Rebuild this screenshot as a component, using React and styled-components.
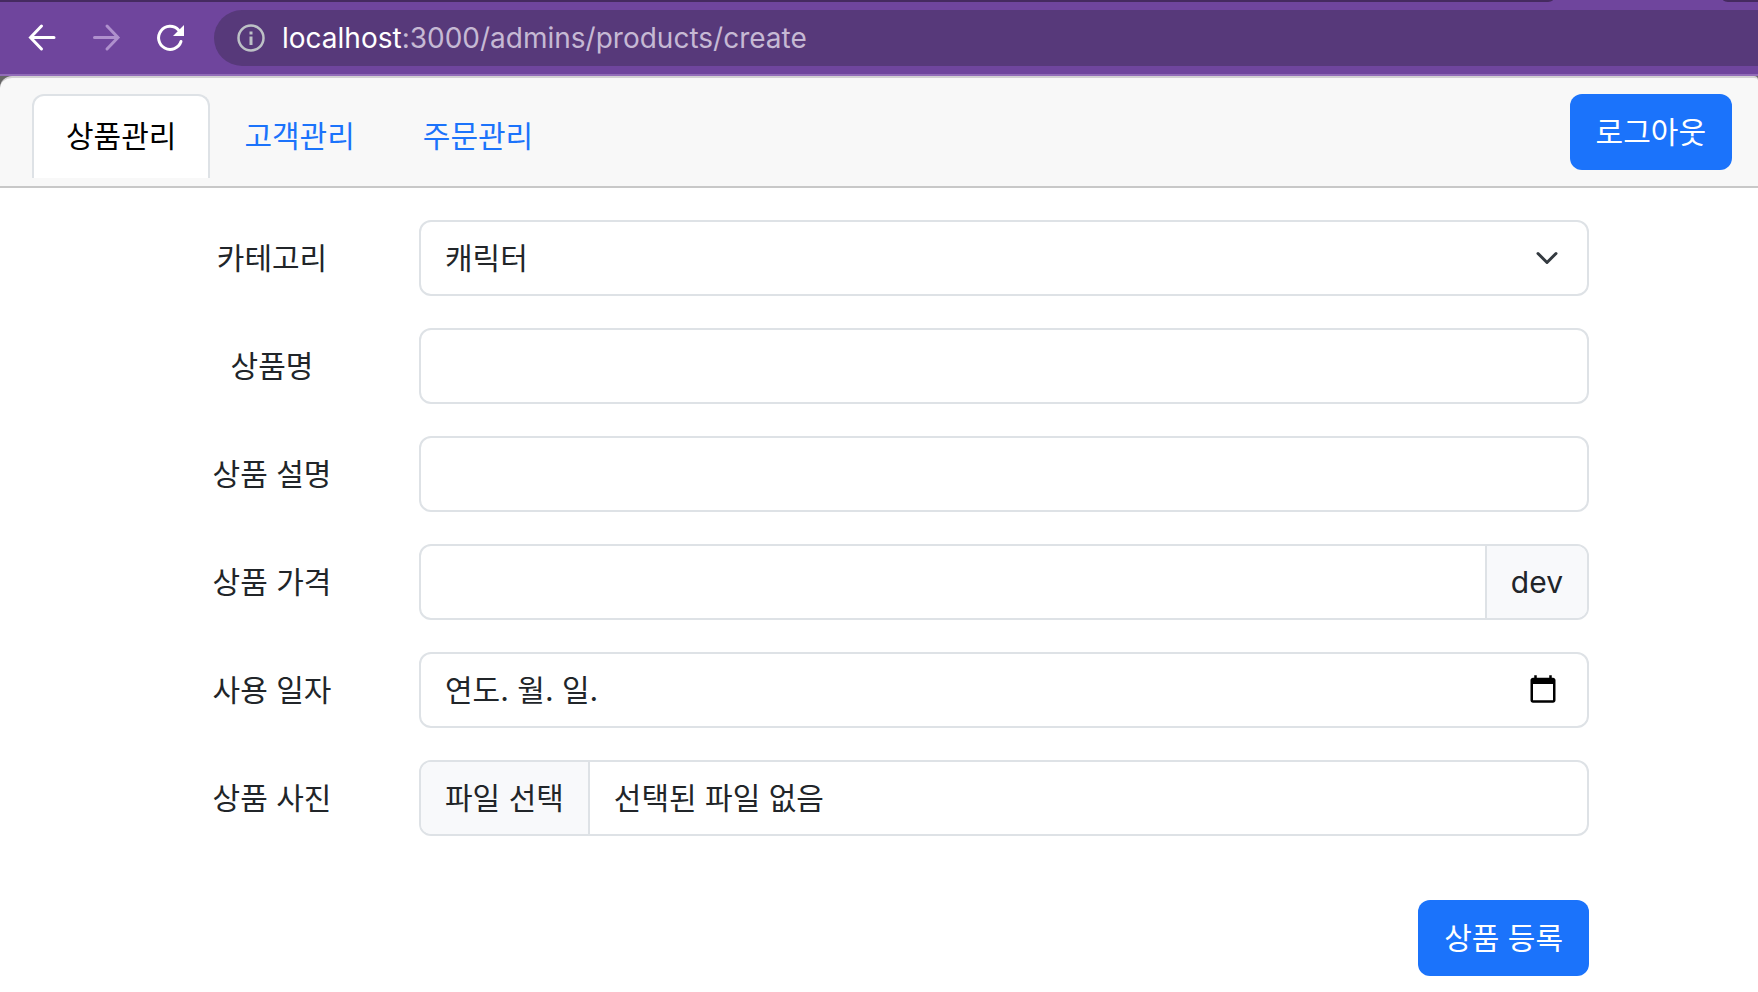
import React, { useState } from "react"
import styled, { createGlobalStyle } from "styled-components"

const GlobalStyle = createGlobalStyle`
* {
box-sizing: border-box;
}
body {
margin: 0;
background: #fff;
color: #212529;
font-family: Inter, "Noto Sans CJK KR", sans-serif;
font-size: 30px;
line-height: 48px;
}
button, input, select {
font: inherit;
color: inherit;
}
`

const Browserbar = styled.div`
background: #6f459d;
border-bottom: 2px solid #916cb8;
`

const Tabstrip = styled.div`
display: flex;
justify-content: space-between;
height: 2px;
`

const Stripleft = styled.div`
width: calc(100% - 205px);
background: #452a60;
border-bottom-right-radius: 8px 2px;
`

const Stripright = styled.div`
width: 35px;
background: #452a60;
border-bottom-left-radius: 8px 2px;
`

const Toolbar = styled.div`
display: flex;
align-items: center;
padding: 8px 0 8px 26px;
`

const Navbutton = styled.button`
display: flex;
width: 32px;
height: 32px;
margin-right: 32px;
padding: 0;
border: 0;
background: none;
color: #fff;

&:disabled {
color: #af90cd;
}
`

const Address = styled.div`
flex: 1;
display: flex;
align-items: center;
gap: 16px;
height: 56px;
margin-left: -4px;
padding-left: 22px;
border-radius: 28px 0 0 28px;
background: #57397a;
`

const Url = styled.p`
margin: 0;
font-size: 28px;
line-height: 32px;
color: #c6b9d4;
`

const Host = styled.span`
color: #fff;
`

const Backdrop = styled.div`
background: linear-gradient(#666 50%, #fff 50%);
`

const Header = styled.header`
display: flex;
justify-content: space-between;
align-items: flex-start;
padding: 16px 26px 8px 32px;
border-top: 2px solid #d2d0d3;
border-bottom: 2px solid #c8c8c8;
border-radius: 12px 4px 0 0;
background: #f8f8f8;
`

const Tabs = styled.nav`
display: flex;
`

const Tab = styled.a`
padding: 16px 32px 18px;
border: 2px solid transparent;
border-bottom: 0;
border-radius: 12px 12px 0 0;
color: #1b73fb;
text-decoration: none;

&[aria-current] {
border-color: #dee2e6;
background: #fff;
color: #000;
}
`

const Button = styled.button`
height: 76px;
padding: 0 26px;
border: 0;
border-radius: 12px;
background: #1b73fb;
color: #fff;
`

const Form = styled.form`
max-width: 1420px;
margin: 0 auto;
padding: 32px 0 16px;
`

const Row = styled.div`
display: grid;
grid-template-columns: 206px 1fr;
column-gap: 44px;
align-items: center;
margin-bottom: 32px;
`

const Label = styled.label`
text-align: center;
`

const Field = styled.div`
position: relative;
display: flex;
height: 76px;
border: 2px solid #dee2e6;
border-radius: 12px;
background: #fff;
overflow: hidden;
`

const Input = styled.input`
flex: 1;
min-width: 0;
padding: 0 24px;
border: 0;
outline: 0;
background: none;
`

const Select = styled.select`
flex: 1;
padding: 0 72px 0 24px;
border: 0;
outline: 0;
appearance: none;
background: none;
`

const Chevron = styled.svg`
position: absolute;
top: 24px;
right: 28px;
pointer-events: none;
`

const Unit = styled.span`
display: flex;
align-items: center;
padding: 0 24px;
border-left: 2px solid #dee2e6;
background: #f8f9fb;
`

const Datebutton = styled.button`
display: flex;
align-items: center;
padding: 0 29px 2px;
border: 0;
background: none;
color: #000;
`

const Fileinput = styled.input`
position: absolute;
inset: 0;
width: 100%;
opacity: 0;
`

const Filebutton = styled.span`
display: flex;
align-items: center;
padding: 0 24px;
border-right: 2px solid #dee2e6;
background: #f8f9fb;
`

const Filename = styled.span`
display: flex;
align-items: center;
padding: 0 24px;
`

const Actions = styled.div`
display: flex;
justify-content: flex-end;
padding-top: 32px;
`

const Browser = () => (
  <Browserbar>
    <Tabstrip>
      <Stripleft />
      <Stripright />
    </Tabstrip>
    <Toolbar>
      <Navbutton type="button" aria-label="뒤로">
        <svg width="32" height="32" fill="none" stroke="currentColor" strokeWidth="3">
          <path d="M28 15.5H4.500M15.500 4L4.500 15.500L15.500 27" strokeLinecap="round" />
        </svg>
      </Navbutton>
      <Navbutton type="button" aria-label="앞으로" disabled>
        <svg width="32" height="32" fill="none" stroke="currentColor" strokeWidth="3">
          <path d="M4.500 15.500H28M17 4L28 15.500L17 27" strokeLinecap="round" />
        </svg>
      </Navbutton>
      <Navbutton type="button" aria-label="새로고침">
        <svg width="32" height="32" fill="none" stroke="currentColor" strokeWidth="3">
          <path d="M27 19.500A11.500 11.500 0 1 1 24.500 8" strokeLinecap="round" />
          <path d="M30 3V14H19Z" fill="currentColor" stroke="none" />
        </svg>
      </Navbutton>
      <Address>
        <svg width="30" height="30" fill="none" stroke="#bdc1c6">
          <circle cx="15" cy="15" r="12.500" strokeWidth="2.500" />
          <path d="M15 8.500V11.500M15 13.500V22" strokeWidth="3" />
        </svg>
        <Url><Host>localhost</Host>:3000/admins/products/create</Url>
      </Address>
    </Toolbar>
  </Browserbar>
)

const TextRow = (props) => (
  <Row>
    <Label htmlFor={props.id}>{props.label}</Label>
    <Field>
      <Input id={props.id} type="text" />
      {props.unit && <Unit>{props.unit}</Unit>}
    </Field>
  </Row>
)

const App = () => {
  const [date, setDate] = useState("연도. 월. 일.")
  const [file, setFile] = useState("선택된 파일 없음")

  return (
    <>
      <GlobalStyle />
      <Browser />
      <Backdrop>
        <Header>
          <Tabs>
            <Tab href="#products" aria-current="page">상품관리</Tab>
            <Tab href="#customers">고객관리</Tab>
            <Tab href="#orders">주문관리</Tab>
          </Tabs>
          <Button type="button">로그아웃</Button>
        </Header>
      </Backdrop>
      <Form onSubmit={(e) => e.preventDefault()}>
        <Row>
          <Label htmlFor="category">카테고리</Label>
          <Field>
            <Select id="category">
              <option>캐릭터</option>
            </Select>
            <Chevron width="24" height="24" viewBox="0 0 16 16" fill="none">
              <path d="m2 5 6 6 6-6" stroke="#343a40" strokeWidth="2" strokeLinecap="round" strokeLinejoin="round" />
            </Chevron>
          </Field>
        </Row>
        <TextRow id="name" label="상품명" />
        <TextRow id="description" label="상품 설명" />
        <TextRow id="price" label="상품 가격" unit="dev" />
        <Row>
          <Label htmlFor="date">사용 일자</Label>
          <Field>
            <Input id="date" type="text" value={date} onChange={(e) => setDate(e.target.value)} />
            <Datebutton type="button" aria-label="날짜 선택">
              <svg width="30" height="30" viewBox="0 0 24 24" fill="currentColor">
                <path d="M20 3h-1V1h-2v2H7V1H5v2H4c-1.100 0-2 .9-2 2v16c0 1.100.9 2 2 2h16c1.100 0 2-.9 2-2V5c0-1.100-.9-2-2-2zm0 18H4V8h16v13z" />
              </svg>
            </Datebutton>
          </Field>
        </Row>
        <Row>
          <Label htmlFor="photo">상품 사진</Label>
          <Field>
            <Filebutton>파일 선택</Filebutton>
            <Filename>{file}</Filename>
            <Fileinput
              id="photo"
              type="file"
              onChange={(e) => e.target.files[0] && setFile(e.target.files[0].name)}
            />
          </Field>
        </Row>
        <Actions>
          <Button type="submit">상품 등록</Button>
        </Actions>
      </Form>
    </>
  )
}

export default App
